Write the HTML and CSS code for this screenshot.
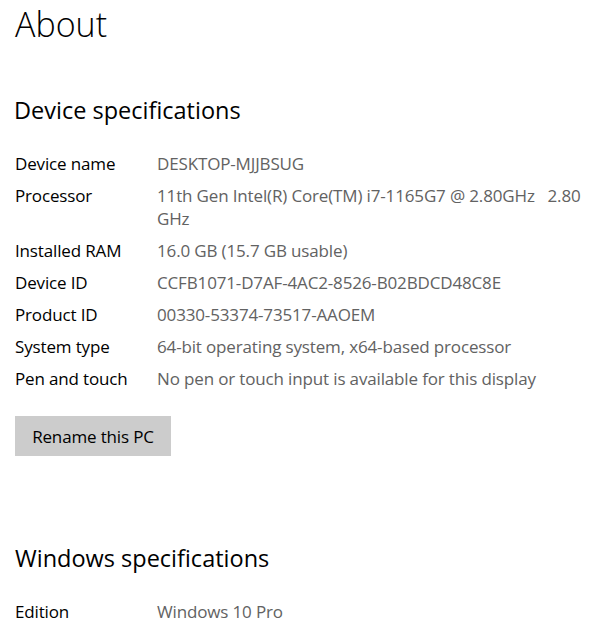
FILE: index.html
```html
<!DOCTYPE html>
<html>
<head>
<meta charset="utf-8">
<link rel="stylesheet" href="styles.css">
</head>
<body>
<div class="page">
  <h1 class="title">About</h1>
  <h2 class="section">Device specifications</h2>
  <div class="specs">
    <div class="label">Device name</div><div class="value">DESKTOP-MJJBSUG</div>
    <div class="label">Processor</div><div class="value">11th Gen Intel(R) Core(TM) i7-1165G7 @ 2.80GHz&nbsp;&nbsp;&nbsp;2.80 GHz</div>
    <div class="label">Installed RAM</div><div class="value">16.0 GB (15.7 GB usable)</div>
    <div class="label">Device ID</div><div class="value">CCFB1071-D7AF-4AC2-8526-B02BDCD48C8E</div>
    <div class="label">Product ID</div><div class="value">00330-53374-73517-AAOEM</div>
    <div class="label">System type</div><div class="value">64-bit operating system, x64-based processor</div>
    <div class="label">Pen and touch</div><div class="value">No pen or touch input is available for this display</div>
  </div>
  <button class="btn">Rename this PC</button>
  <h2 class="section section-win">Windows specifications</h2>
  <div class="specs">
    <div class="label">Edition</div><div class="value">Windows 10 Pro</div>
  </div>
</div>
</body>
</html>
```
FILE: styles.css
```css
html, body {
  margin: 0;
  padding: 0;
  background: #ffffff;
}
body {
  font-family: "Open Sans", "Noto Sans", sans-serif;
  color: #000;
  overflow: hidden;
}
.page {
  padding: 0 0 0 15px;
  width: 580px;
}
.title {
  margin: 0;
  font-weight: 300;
  font-size: 34px;
  line-height: 48px;
}
.section {
  margin: 46px 0 0 -1px;
  font-weight: 400;
  font-size: 23.5px;
  line-height: 32px;
}
.specs {
  display: grid;
  grid-template-columns: 142px 1fr;
  row-gap: 9px;
  margin-top: 26px;
  font-size: 17px;
  line-height: 23px;
  letter-spacing: -0.15px;
}
.label {
  color: #000;
}
.value {
  color: #626262;
}
.btn {
  display: block;
  margin-top: 26px;
  width: 156px;
  height: 40px;
  border: none;
  background: #cccccc;
  font-family: inherit;
  font-size: 17px;
  letter-spacing: -0.15px;
  color: #000;
  padding: 0;
  text-align: center;
}
.section-win {
  margin-top: 86px;
  margin-left: 0;
}
```
